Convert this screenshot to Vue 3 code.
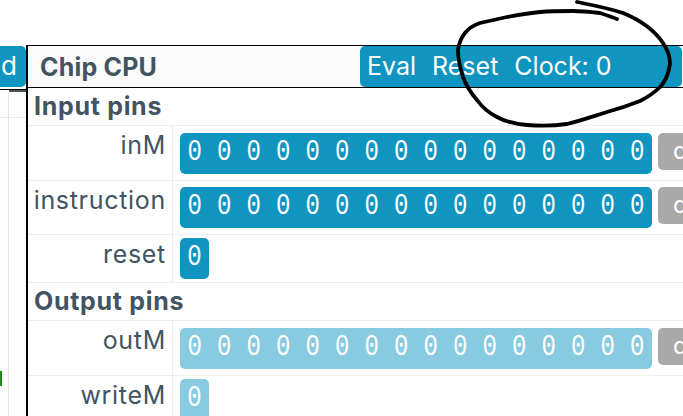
<template>
  <div class="page">
    <div class="side">
      <div class="side-head">
        <span class="side-btn">d</span>
      </div>
      <div class="side-tab"></div>
      <div class="side-body">
        <div class="side-row"></div>
        <div class="side-col"></div>
        <div class="side-mark"></div>
      </div>
    </div>

    <div class="chip">
      <div class="chip-head">
        <span class="title">Chip CPU</span>
        <div class="actions">
          <span>Eval</span>
          <span>Reset</span>
          <span>Clock: 0</span>
        </div>
      </div>

      <div v-for="group in groups" :key="group.name" class="group">
        <div class="group-title">{{ group.name }}</div>
        <div v-for="pin in group.pins" :key="pin.name" class="pin" :class="{ wide: pin.bits > 1 }">
          <div class="pin-name">{{ pin.name }}</div>
          <div class="pin-value">
            <div class="bits" :class="{ faded: group.output }">
              <span v-for="n in pin.bits" :key="n" class="bit">0</span>
            </div>
            <span v-if="pin.bits > 1" class="fmt">dec</span>
          </div>
        </div>
      </div>
    </div>

    <svg class="scribble" width="683" height="416" viewBox="0 0 683 416">
      <path d="M577 2 C592 5 608 8 623 13 C640 20 655 31 663 43 C669 52 671 62 669 69 C667 78 664 83 660 87 C653 94 646 98 640 101 C630 105 618 109 607 112 C594 116 580 121 567 124 C553 126 540 126 527 125 C516 124 506 122 497 117 C489 113 482 107 477 100 C470 92 466 85 463 77 C460 68 458 59 458 50 C459 43 461 38 465 33 C469 28 474 25 480 23 C489 21 498 19 507 17 C518 15 529 13 540 12 C551 11 562 11 573 11 C582 11 591 12 600 13 C606 15 612 17 617 19" />
    </svg>
  </div>
</template>

<script setup>
const groups = [
  {
    name: 'Input pins',
    pins: [
      { name: 'inM', bits: 16 },
      { name: 'instruction', bits: 16 },
      { name: 'reset', bits: 1 },
    ],
  },
  {
    name: 'Output pins',
    output: true,
    pins: [
      { name: 'outM', bits: 16 },
      { name: 'writeM', bits: 1 },
    ],
  },
];
</script>

<style>
html, body {
  margin: 0;
  background: #fff;
}
</style>

<style scoped>
.page {
  position: relative;
  width: 683px;
  height: 416px;
  padding-top: 45px;
  box-sizing: border-box;
  overflow: hidden;
  display: flex;
  background: #fff;
  font-family: "Inter", "Open Sans", sans-serif;
  color: #415462;
}
.side {
  width: 26px;
  flex: none;
  display: flex;
  flex-direction: column;
}
.side-head {
  height: 45px;
  box-sizing: border-box;
  border-bottom: 1px solid #000;
  overflow: hidden;
  display: flex;
  justify-content: flex-end;
  padding-top: 1px;
}
.side-btn {
  width: 60px;
  height: 41px;
  flex: none;
  background: #1095c1;
  border-radius: 0 5px 5px 0;
  color: #fff;
  font-size: 26px;
  line-height: 40px;
  text-align: right;
  padding-right: 9px;
  box-sizing: border-box;
}
.side-tab {
  height: 2px;
  margin-left: 9px;
  background: #415462;
}
.side-body {
  flex: 1;
  position: relative;
  background: #fdfdfc;
}
.side-row {
  height: 25px;
  border-bottom: 1px solid #e8ebee;
}
.side-col {
  position: absolute;
  left: 8px;
  top: 0;
  bottom: 0;
  width: 1px;
  background: #e2e4e6;
}
.side-mark {
  position: absolute;
  left: 0;
  top: 279px;
  width: 2px;
  height: 15px;
  background: #1c8a1c;
}
.chip {
  flex: 1;
  min-width: 0;
  border-left: 2px solid #000;
}
.chip-head {
  height: 43px;
  box-sizing: border-box;
  display: flex;
  align-items: center;
  padding: 0 0 0 12px;
  background: #fafafa;
  border-top: 1px solid #000;
  border-bottom: 1px solid #000;
}
.title {
  font-size: 25px;
  font-weight: 700;
  letter-spacing: 0.2px;
  width: 320px;
  flex: none;
}
.actions {
  width: 322px;
  flex: none;
  height: 41px;
  box-sizing: border-box;
  background: #1095c1;
  border-radius: 5px;
  color: #fff;
  font-size: 25px;
  line-height: 40px;
  padding-left: 7px;
  display: flex;
  gap: 16px;
  white-space: nowrap;
}
.group-title {
  height: 38px;
  box-sizing: border-box;
  padding-left: 6px;
  font-size: 25px;
  font-weight: 700;
  line-height: 36px;
  border-bottom: 1px solid #eceff1;
  letter-spacing: 0.7px;
}
.pin {
  display: flex;
  height: 47.8px;
  box-sizing: border-box;
  border-bottom: 1px solid #eceff1;
}
.pin.wide {
  height: 54.6px;
}
.pin-name {
  width: 145px;
  flex: none;
  box-sizing: border-box;
  padding-right: 6px;
  text-align: right;
  font-size: 25px;
  letter-spacing: 0.7px;
  line-height: 38px;
  border-right: 1px solid #eceff1;
}
.pin-value {
  display: flex;
  align-items: flex-start;
  gap: 6px;
  padding: 3px 0 0 7px;
}
.pin.wide .pin-value {
  padding-top: 6.8px;
}
.bits {
  display: flex;
  height: 41px;
  background: #1095c1;
  border-radius: 5px;
  color: #fff;
}
.bits.faded {
  background: #88cbe0;
}
.bit {
  width: 29.5px;
  text-align: center;
  font-family: "Liberation Mono", monospace;
  font-size: 24px;
  line-height: 40px;
  transform: scaleY(1.25);
}
.bit:only-child {
  width: 29px;
}
.fmt {
  width: 60px;
  height: 37px;
  flex: none;
  background: #a9a9a9;
  border-radius: 5px;
  color: #fff;
  font-size: 24px;
  line-height: 36px;
  padding-left: 15px;
  box-sizing: border-box;
}
.scribble {
  position: absolute;
  left: 0;
  top: 0;
  pointer-events: none;
}
.scribble path {
  fill: none;
  stroke: #000;
  stroke-width: 3.8;
  stroke-linecap: round;
  stroke-linejoin: round;
}
</style>
